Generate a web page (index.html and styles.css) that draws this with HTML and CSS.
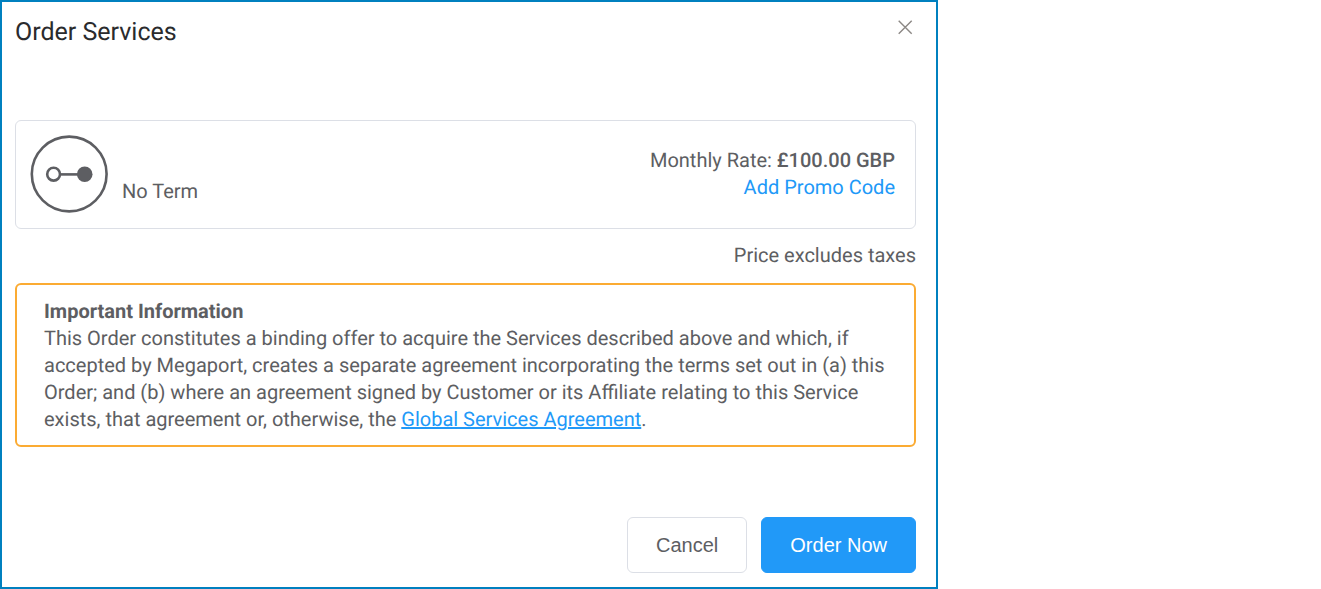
FILE: index.html
```html
<!DOCTYPE html>
<html lang="en">
<head>
<meta charset="utf-8">
<meta name="viewport" content="width=device-width, initial-scale=1">
<title>Order Services</title>
<link rel="stylesheet" href="styles.css">
</head>
<body>
<main class="dialog" role="dialog" aria-labelledby="title">
  <header class="header">
    <h1 class="title" id="title">Order Services</h1>
    <button class="close" type="button" aria-label="Close">
      <svg width="16" height="16" viewBox="0 0 16 16" fill="none" stroke="#8c8885" stroke-width="1.4"><path d="M1.7 1.7l13 13M14.7 1.7l-13 13"/></svg>
    </button>
  </header>
  <section class="service">
    <svg class="service-icon" width="78" height="78" viewBox="0 0 78 78" fill="none" stroke="#5d5e62" aria-hidden="true">
      <circle cx="39.2" cy="39" r="37.4" stroke-width="2.6"/>
      <circle cx="23.6" cy="39.2" r="6.4" stroke-width="2.6"/>
      <path d="M30 39.4h20" stroke-width="2.6"/>
      <circle cx="54.7" cy="39.2" r="7.8" fill="#5d5e62" stroke="none"/>
    </svg>
    <span class="term">No Term</span>
    <div class="price">
      <div>Monthly Rate: <strong class="amount">£100.00 GBP</strong></div>
      <a class="promo" href="#promo">Add Promo Code</a>
    </div>
  </section>
  <p class="tax">Price excludes taxes</p>
  <section class="notice">
    <h2 class="notice-title">Important Information</h2>
    <p class="notice-text">This Order constitutes a binding offer to acquire the Services described above and which, if accepted by Megaport, creates a separate agreement incorporating the terms set out in (a) this Order; and (b) where an agreement signed by Customer or its Affiliate relating to this Service exists, that agreement or, otherwise, the <a class="agreement" href="#agreement">Global Services Agreement</a>.</p>
  </section>
  <footer class="actions">
    <button class="button" type="button">Cancel</button>
    <button class="button button-primary" type="button">Order Now</button>
  </footer>
</main>
</body>
</html>
```
FILE: styles.css
```css
* {
  box-sizing: border-box;
}

body {
  margin: 0;
  background: #fff;
  color: #5d5e62;
  font: 20px/27px Roboto, "Liberation Sans", sans-serif;
  text-rendering: geometricPrecision;
}

.dialog {
  display: flex;
  flex-direction: column;
  max-width: 938px;
  min-height: 100vh;
  padding: 14px 20px 14px 13px;
  border: 2px solid #0080bf;
}

.header {
  display: flex;
  justify-content: space-between;
  align-items: flex-start;
  margin-bottom: 70px;
}

.title {
  margin: 0;
  color: #2a2b2d;
  font-size: 25px;
  font-weight: 400;
  line-height: 34px;
}

.close {
  display: flex;
  margin: 3px 3px 0 0;
  padding: 0;
  border: 0;
  background: none;
}

.service {
  display: flex;
  align-items: center;
  gap: 14px;
  padding: 14px 20px 15px 14px;
  border: 1px solid #dcdfe6;
  border-radius: 6px;
}

.service-icon {
  flex: none;
}

.term {
  align-self: flex-end;
  margin-bottom: 8px;
}

.price {
  margin-left: auto;
  text-align: right;
}

.amount {
  font-weight: 500;
}

.promo,
.agreement {
  color: #2199f8;
}

.promo {
  text-decoration: none;
}

.tax {
  margin: 13px 0 14px;
  text-align: right;
}

.notice {
  padding: 13px 27px 12px;
  border: 2px solid #fbab33;
  border-radius: 6px;
}

.notice-title {
  margin: 0;
  font-size: 20px;
  font-weight: 700;
}

.notice-text {
  margin: 0;
}

.actions {
  display: flex;
  justify-content: flex-end;
  gap: 14px;
  margin-top: auto;
}

.button {
  padding: 14px 28px;
  border: 1px solid #dcdfe6;
  border-radius: 6px;
  background: #fff;
  color: #5d5e62;
  font: 20px/26px "Liberation Sans", Arial, sans-serif;
}

.button-primary {
  border-color: #2199f8;
  background: #2199f8;
  color: #fff;
}
```
